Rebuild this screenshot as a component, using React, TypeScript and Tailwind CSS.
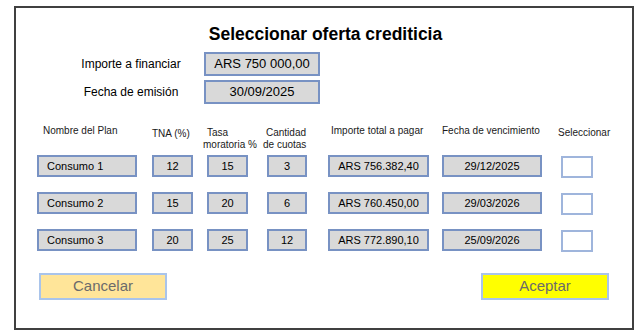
import React from 'react';

type Oferta = {
  plan: string;
  tna: string;
  mora: string;
  cuotas: string;
  total: string;
  venc: string;
};

const ofertas: Oferta[] = [
  { plan: 'Consumo 1', tna: '12', mora: '15', cuotas: '3', total: 'ARS 756.382,40', venc: '29/12/2025' },
  { plan: 'Consumo 2', tna: '15', mora: '20', cuotas: '6', total: 'ARS 760.450,00', venc: '29/03/2026' },
  { plan: 'Consumo 3', tna: '20', mora: '25', cuotas: '12', total: 'ARS 772.890,10', venc: '25/09/2026' },
];

const box =
  'flex h-[22px] shrink-0 items-center border-2 border-[#7892c3] bg-[#d9d9d9] text-[11px] leading-[13px] text-black';

function OfertaRow({ o }: { o: Oferta }) {
  return (
    <div className="flex items-start pl-[21px]">
      <div className={`${box} w-[100px] pl-[8px]`}>{o.plan}</div>
      <div className={`${box} ml-[15px] w-[41px] justify-center`}>{o.tna}</div>
      <div className={`${box} ml-[14px] w-[41px] justify-center`}>{o.mora}</div>
      <div className={`${box} ml-[19px] w-[40px] justify-center`}>{o.cuotas}</div>
      <div className={`${box} ml-[21px] w-[101px] justify-center`}>{o.total}</div>
      <div className={`${box} ml-[13px] w-[100px] justify-center`}>{o.venc}</div>
      <div className="ml-[19px] mt-[1px] h-[22px] w-[32px] shrink-0 border-2 border-[#9fb5dc] bg-white" />
    </div>
  );
}

export default function App() {
  return (
    <div
      className="min-h-screen bg-white pl-[14px] pt-[6px]"
      style={{ fontFamily: '"Liberation Sans", Arial, sans-serif' }}
    >
      <div className="flex h-[324px] w-[620px] flex-col border-2 border-[#404040] bg-white">
        <h1 className="mt-[16px] pl-[3px] text-center text-[17.5px] font-bold leading-[20px] text-black">
          Seleccionar oferta crediticia
        </h1>

        <div className="mt-[8px] flex flex-col gap-[4px]">
          <div className="flex items-center pl-[54px]">
            <span className="w-[122px] text-center text-[12px] leading-[14px] text-black">Importe a financiar</span>
            <div className="ml-[12px] flex h-[24px] w-[116px] items-center justify-center border-2 border-[#7892c3] bg-[#d9d9d9] text-[13px] text-black">
              ARS 750 000,00
            </div>
          </div>
          <div className="flex items-center pl-[54px]">
            <span className="w-[122px] text-center text-[12px] leading-[14px] text-black">Fecha de emisión</span>
            <div className="ml-[12px] flex h-[24px] w-[116px] items-center justify-center border-2 border-[#7892c3] bg-[#d9d9d9] text-[13px] text-black">
              30/09/2025
            </div>
          </div>
        </div>

        <div className="mt-[21px] flex h-[30px] items-start pl-[27px] text-[10px] leading-[12px] text-[#1a1a1a] whitespace-nowrap">
          <span className="w-[109px]">Nombre del Plan</span>
          <span className="mt-[3px] w-[51px]">TNA (%)</span>
          <div className="mt-[2px] flex w-[60px] flex-col">
            <span className="pl-[4px]">Tasa</span>
            <span>moratoria %</span>
          </div>
          <div className="mt-[2px] flex w-[43px] flex-col text-right">
            <span>Cantidad</span>
            <span>de cuotas</span>
          </div>
          <span className="ml-[25px] w-[111px]">Importe total a pagar</span>
          <span className="w-[116px]">Fecha de vencimiento</span>
          <span className="mt-[2px]">Seleccionar</span>
        </div>

        <div className="flex flex-col gap-[14px]">
          {ofertas.map((o) => (
            <OfertaRow key={o.plan} o={o} />
          ))}
        </div>

        <div className="mt-[21px] flex justify-between px-[23px]">
          <button className="flex h-[27px] w-[128px] items-center justify-center border-2 border-[#a9c4eb] bg-[#ffe599] text-[15px] text-[#6b6b6b]">
            Cancelar
          </button>
          <button className="flex h-[27px] w-[128px] items-center justify-center border-2 border-[#a9c4eb] bg-[#ffff00] text-[15px] text-[#6b6b6b]">
            Aceptar
          </button>
        </div>
      </div>
    </div>
  );
}
